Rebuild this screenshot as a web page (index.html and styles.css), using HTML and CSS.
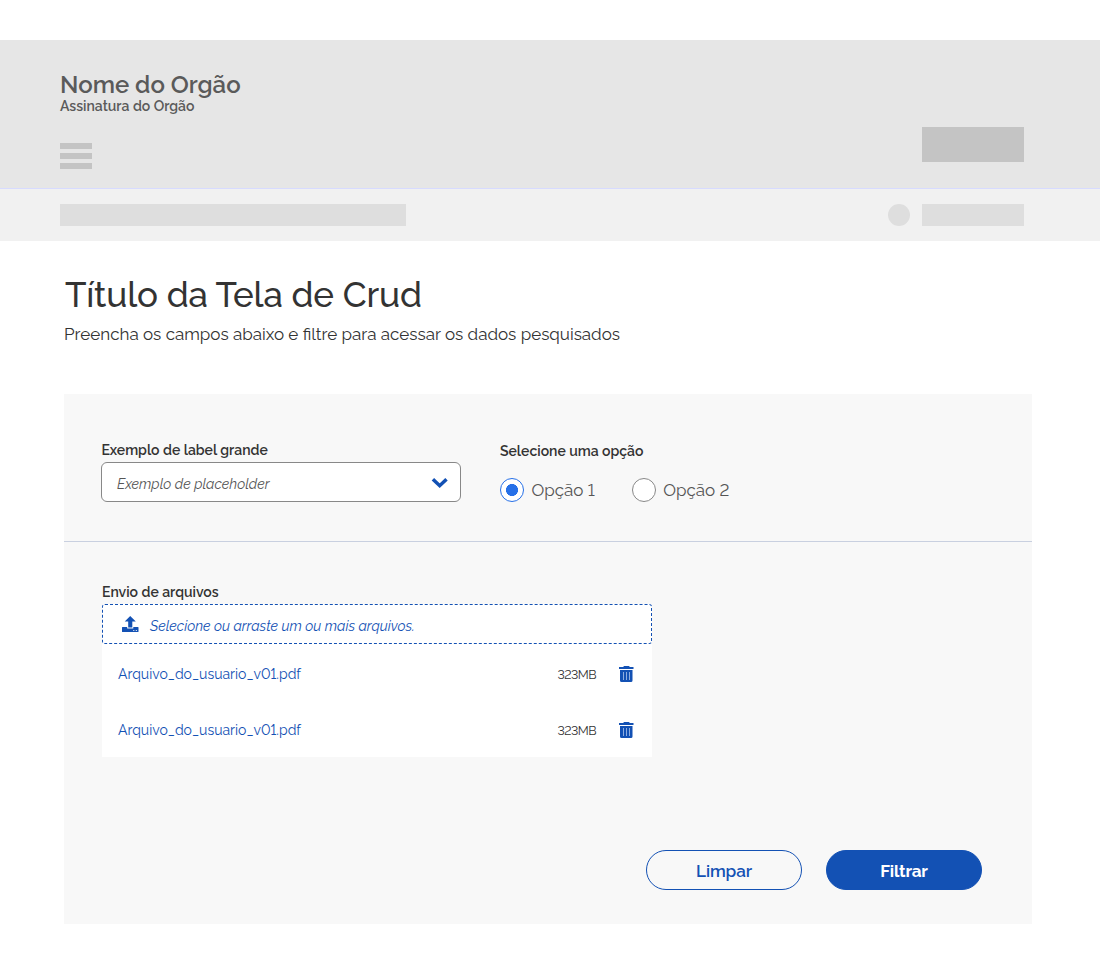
FILE: index.html
```html
<!DOCTYPE html>
<html lang="pt-BR">
<head>
<meta charset="utf-8">
<title>Título da Tela de Crud</title>
<link rel="stylesheet" href="styles.css">
</head>
<body>
<header class="header">
  <div class="brand">
    <div class="org">Nome do Orgão</div>
    <div class="signature">Assinatura do Orgão</div>
    <div class="burger"><i></i><i></i><i></i></div>
  </div>
  <div class="header-action"></div>
</header>
<nav class="subbar">
  <div class="crumb"></div>
  <div class="avatar"></div>
  <div class="user"></div>
</nav>
<main class="main">
  <h1 class="title">Título da Tela de Crud</h1>
  <p class="lead">Preencha os campos abaixo e filtre para acessar os dados pesquisados</p>
  <section class="panel">
    <div class="filters">
      <div class="field">
        <div class="label">Exemplo de label grande</div>
        <div class="select">
          <span class="placeholder">Exemplo de placeholder</span>
          <svg class="chevron" width="18" height="12" viewBox="0 0 18 12"><path d="M1.900 2.200 8.700 8.700l6.800-6.500" fill="none" stroke="#1351b4" stroke-width="3.500"/></svg>
        </div>
      </div>
      <div class="options">
        <div class="label label-options">Selecione uma opção</div>
        <div class="radios">
          <div class="radio checked"><span class="dot"></span><span>Opção 1</span></div>
          <div class="radio"><span class="dot"></span><span>Opção 2</span></div>
        </div>
      </div>
    </div>
    <div class="upload">
      <div class="label">Envio de arquivos</div>
      <div class="drop">
        <svg width="17" height="16" viewBox="0 0 17 16" fill="#1351b4"><path d="M8.200 0 13.800 5.600h-3.500v6H6.200v-6H2.700z"/><path fill-rule="evenodd" d="M.5 11h4.700v1.600h6.100V11H16q.5 0 .5.500v4q0 .5-.5.500H.5q-.5 0-.5-.5v-4q0-.5.500-.5zM11.300 14v1h1v-1zM13.800 14v1h1v-1z"/></svg>
        <span class="drop-text">Selecione ou arraste um ou mais arquivos.</span>
      </div>
      <div class="files">
        <div class="file">
          <span class="name">Arquivo_do_usuario_v01.pdf</span><span class="size">323MB</span>
          <svg width="15" height="16" viewBox="0 0 15 16"><path fill="#1351b4" d="M0 1h4.200l.8-1h5l.8 1H14.500v2H0zM1 4h12.500v10.500q0 1.500-1.500 1.500H2.500Q1 16 1 14.500z"/><path d="M4.500 6v8M7.500 6v8M10.500 6v8" stroke="#8eade0"/></svg>
        </div>
        <div class="file">
          <span class="name">Arquivo_do_usuario_v01.pdf</span><span class="size">323MB</span>
          <svg width="15" height="16" viewBox="0 0 15 16"><path fill="#1351b4" d="M0 1h4.200l.8-1h5l.8 1H14.500v2H0zM1 4h12.500v10.500q0 1.500-1.500 1.500H2.500Q1 16 1 14.500z"/><path d="M4.500 6v8M7.500 6v8M10.500 6v8" stroke="#8eade0"/></svg>
        </div>
      </div>
    </div>
    <div class="actions">
      <button class="btn outline">Limpar</button>
      <button class="btn solid">Filtrar</button>
    </div>
  </section>
</main>
</body>
</html>
```
FILE: styles.css
```css
* { box-sizing: border-box; }
body {
  margin: 0;
  padding-top: 40px;
  height: 964px;
  background: #fff;
  color: #333;
  font-family: Raleway, Lato, sans-serif;
  font-variant-numeric: lining-nums;
}
svg { display: block; flex: none; }
span { white-space: nowrap; }

.header {
  display: flex;
  justify-content: space-between;
  height: 149px;
  padding: 0 76px 0 60px;
  background: #e6e6e6;
  border-bottom: 1px solid #d7dbff;
  color: #5a5a5a;
}
.org { padding-top: 31px; font-size: 24px; line-height: 28px; font-weight: 600; }
.signature { margin-top: -1px; font-size: 14px; line-height: 16px; font-weight: 600; }
.burger { display: grid; gap: 4px; width: 32px; margin-top: 29px; }
.burger i { height: 6px; background: #c4c4c4; }
.header-action { width: 102px; height: 35px; margin-top: 87px; background: #c4c4c4; }

.subbar {
  display: flex;
  align-items: center;
  height: 52px;
  padding: 0 76px 0 60px;
  background: #f1f1f1;
}
.crumb { width: 346px; height: 22px; margin-right: auto; background: #dedede; }
.avatar { width: 22px; height: 22px; margin-right: 12px; border-radius: 50%; background: #dedede; }
.user { width: 102px; height: 22px; background: #dedede; }

.main { padding: 32px 68px 0 64px; }
.title { margin: 0 0 0 1px; font-size: 35px; line-height: 44px; font-weight: 500; letter-spacing: -0.12px; }
.lead { margin: 6px 0 0; font-size: 17px; line-height: 22px; }
.panel { height: 530px; margin-top: 49px; background: #f8f8f8; }

.filters {
  display: flex;
  gap: 38.5px;
  height: 148px;
  padding: 46px 37.4px 0;
  border-bottom: 1px solid #c9d0e0;
}
.label { font-size: 14px; line-height: 20px; font-weight: 600; }
.field { width: 360.1px; }
.select {
  display: flex;
  align-items: center;
  justify-content: space-between;
  height: 40px;
  margin-top: 2px;
  padding: 3px 11.5px 0 14.6px;
  background: #fff;
  border: 1px solid #888;
  border-radius: 6px;
}
.chevron { margin-top: -1px; }
.placeholder { font-size: 14px; font-style: italic; color: #555; }
.label-options { padding-top: 1px; }
.radios { display: flex; margin-top: 17px; gap: 37px; }
.radio { display: flex; align-items: center; gap: 7.5px; font-size: 17px; line-height: 24px; color: #555; }
.dot { width: 24px; height: 24px; border: 1px solid #888; border-radius: 50%; background: #fff; }
.checked .dot { border-color: #2670e8; background: radial-gradient(circle, #2670e8 5.700px, #fff 6.300px); }

.upload { width: 588px; padding: 40px 0 0 38px; }
.drop {
  display: flex;
  align-items: center;
  gap: 11px;
  height: 40px;
  margin-top: 2px;
  padding-left: 19px;
  color: #1351b4;
  background: #fff;
  border: 1px dashed #1351b4;
  border-radius: 3px;
}
.drop-text { padding-top: 3px; font-size: 14px; font-style: italic; }
.files { height: 113px; background: #fff; }
.file { display: flex; align-items: center; height: 56px; padding: 4px 18px 0 16px; }
.name { margin-right: auto; font-size: 14px; color: #1351b4; }
.size { margin-right: 23px; padding-top: 1px; font-size: 12.500px; letter-spacing: -0.55px; }

.actions { display: flex; justify-content: flex-end; gap: 24px; padding: 93px 50px 0 0; }
.btn {
  width: 156px;
  height: 40px;
  padding: 2px 0 0;
  border: 1px solid #1351b4;
  border-radius: 20px;
  font: 600 17px Raleway, Lato, sans-serif;
}
.outline { color: #1351b4; background: transparent; letter-spacing: -0.1px; }
.solid { color: #fff; background: #1351b4; font-weight: 700; letter-spacing: -0.2px; }
```
